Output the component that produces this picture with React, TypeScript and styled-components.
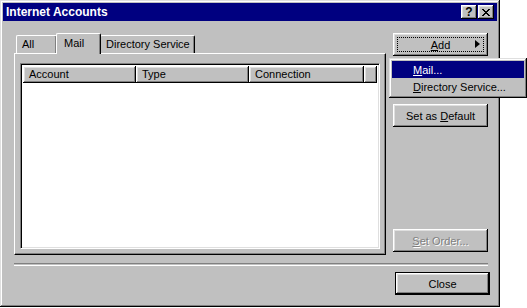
import styled, { createGlobalStyle, css } from "styled-components";

const Global = createGlobalStyle`
  html, body { margin: 0; padding: 0; background: #ffffff; }
  body { font-family: "Liberation Sans", Arial, sans-serif; font-size: 11px; color: #000; }
`;

const raised = css`
  box-shadow: inset -1px -1px #000000, inset 1px 1px #ffffff,
    inset -2px -2px #808080, inset 2px 2px #dfdfdf;
`;

const Window = styled.div`
  position: relative;
  box-sizing: border-box;
  width: 500px;
  height: 307px;
  padding: 3px;
  background: #c0c0c0;
  display: flex;
  flex-direction: column;
  box-shadow: inset -1px -1px #000000, inset 1px 1px #dfdfdf,
    inset -2px -2px #808080, inset 2px 2px #ffffff;
`;

const TitleBar = styled.div`
  height: 18px;
  background: #000080;
  display: flex;
  align-items: center;
  justify-content: space-between;
  padding: 0 3px 0 3px;
`;

const Title = styled.span`
  color: #fff;
  font-weight: bold;
  font-size: 12px;
`;

const TitleButtons = styled.div`
  display: flex;
  gap: 1px;
`;

const TitleButton = styled.div`
  width: 16px;
  height: 14px;
  box-sizing: border-box;
  background: #c0c0c0;
  ${raised};
  display: flex;
  align-items: center;
  justify-content: center;
  font-weight: bold;
  font-size: 12px;
  line-height: 1;
`;

const Content = styled.div`
  flex: 1;
  display: flex;
  flex-direction: column;
  padding: 12px 9px 0 11px;
`;

const MainRow = styled.div`
  display: flex;
  gap: 7px;
  height: 222px;
`;

const LeftCol = styled.div`
  width: 374px;
  display: flex;
  flex-direction: column;
`;

const TabRow = styled.div`
  display: flex;
  align-items: flex-end;
  height: 20px;
  padding-left: 2px;
  position: relative;
  z-index: 1;
`;

const Tab = styled.div<{ $active?: boolean; $w?: number }>`
  box-sizing: border-box;
  background: #c0c0c0;
  ${(p) => (p.$w ? `width: ${p.$w}px;` : "")}
  height: ${(p) => (p.$active ? "21px" : "18px")};
  margin: ${(p) => (p.$active ? "0 -1px -1px -1px" : "0")};
  padding: ${(p) => (p.$active ? "3px 6px 0 7px" : "2px 4px 0 5px")};
  border-top: 1px solid #ffffff;
  border-left: 1px solid #ffffff;
  border-right: 1px solid #000000;
  border-radius: 2px 2px 0 0;
  box-shadow: inset -1px 0 #808080;
  position: relative;
  white-space: nowrap;
  z-index: ${(p) => (p.$active ? 2 : 1)};
`;

const Panel = styled.div`
  flex: 1;
  box-sizing: border-box;
  background: #c0c0c0;
  border-top: 1px solid #ffffff;
  border-left: 1px solid #ffffff;
  border-right: 1px solid #000000;
  border-bottom: 1px solid #000000;
  box-shadow: inset -1px -1px #808080;
  padding: 9px 5px 5px 5px;
  display: flex;
`;

const ListView = styled.div`
  flex: 1;
  box-sizing: border-box;
  background: #ffffff;
  border-top: 1px solid #808080;
  border-left: 1px solid #808080;
  border-right: 1px solid #ffffff;
  border-bottom: 1px solid #ffffff;
  box-shadow: inset 1px 1px #000000, inset -1px -1px #dfdfdf;
  padding: 2px;
  display: flex;
  flex-direction: column;
`;

const HeaderRow = styled.div`
  display: flex;
  height: 17px;
`;

const HeaderCell = styled.div<{ $w?: number }>`
  box-sizing: border-box;
  ${(p) => (p.$w ? `width: ${p.$w}px;` : "flex: 1;")}
  background: #c0c0c0;
  ${raised};
  padding: 2px 0 0 6px;
  white-space: nowrap;
`;

const RightCol = styled.div`
  width: 95px;
  display: flex;
  flex-direction: column;
`;

const Button = styled.button<{ $default?: boolean; $disabled?: boolean }>`
  box-sizing: border-box;
  width: 95px;
  height: 23px;
  border: none;
  background: #c0c0c0;
  font-family: "Liberation Sans", Arial, sans-serif;
  font-size: 11px;
  color: ${(p) => (p.$disabled ? "#808080" : "#000")};
  ${(p) => (p.$disabled ? "text-shadow: 1px 1px #ffffff;" : "")}
  ${(p) =>
    p.$default
      ? `box-shadow: inset 0 0 0 1px #000000, inset -2px -2px #000000, inset 2px 2px #ffffff, inset -3px -3px #808080, inset 3px 3px #dfdfdf;`
      : `box-shadow: inset -1px -1px #000000, inset 1px 1px #ffffff, inset -2px -2px #808080, inset 2px 2px #dfdfdf;`}
  padding: 0;
  display: flex;
  align-items: center;
  justify-content: center;
  position: relative;
`;

const Focus = styled.span`
  position: absolute;
  inset: 4px;
  border: 1px dotted #000;
`;

const Arrow = styled.span`
  position: absolute;
  right: 8px;
  top: 7px;
  width: 0;
  height: 0;
  border-top: 4.5px solid transparent;
  border-bottom: 4.5px solid transparent;
  border-left: 5px solid #000;
`;

const Spacer = styled.div<{ $h?: number }>`
  ${(p) => (p.$h ? `height: ${p.$h}px;` : "flex: 1;")}
`;

const Separator = styled.div`
  margin-top: 8px;
  width: 474px;
  height: 1px;
  border-top: 1px solid #808080;
  border-bottom: 1px solid #ffffff;
`;

const BottomRow = styled.div`
  display: flex;
  justify-content: flex-end;
  margin-top: 6px;
  width: 476px;
`;

const Menu = styled.div`
  position: absolute;
  left: 389px;
  top: 58px;
  width: 138px;
  box-sizing: border-box;
  padding: 3px;
  background: #c0c0c0;
  box-shadow: inset -1px -1px #000000, inset 1px 1px #dfdfdf,
    inset -2px -2px #808080, inset 2px 2px #ffffff;
  z-index: 5;
`;

const MenuItem = styled.div<{ $active?: boolean }>`
  height: 17px;
  display: flex;
  align-items: center;
  padding-left: 21px;
  font-size: 11px;
  background: ${(p) => (p.$active ? "#000080" : "transparent")};
  color: ${(p) => (p.$active ? "#ffffff" : "#000000")};
`;

export default function App() {
  return (
    <>
      <Global />
      <Window>
        <TitleBar>
          <Title>Internet Accounts</Title>
          <TitleButtons>
            <TitleButton>?</TitleButton>
            <TitleButton>
              <svg width="8" height="7" viewBox="0 0 8 7">
                <path d="M0 0h2v1h1v1h2V1h1V0h2v1H7v1H6v1H5v1h1v1h1v1h1v1H6V6H5V5H3v1H2v1H0V6h1V5h1V4h1V3H2V2H1V1H0z" fill="#000" />
              </svg>
            </TitleButton>
          </TitleButtons>
        </TitleBar>
        <Content>
          <MainRow>
            <LeftCol>
              <TabRow>
                <Tab $w={41}>All</Tab>
                <Tab $active $w={45}>
                  Mail
                </Tab>
                <Tab>Directory Service</Tab>
              </TabRow>
              <Panel>
                <ListView>
                  <HeaderRow>
                    <HeaderCell $w={113}>Account</HeaderCell>
                    <HeaderCell $w={113}>Type</HeaderCell>
                    <HeaderCell $w={115}>Connection</HeaderCell>
                    <HeaderCell />
                  </HeaderRow>
                </ListView>
              </Panel>
            </LeftCol>
            <RightCol>
              <Button>
                <Focus />
                <span>
                  <u>A</u>dd
                </span>
                <Arrow />
              </Button>
              <Spacer $h={48} />
              <Button>
                <span>
                  Set as <u>D</u>efault
                </span>
              </Button>
              <Spacer />
              <Button $disabled>
                <span>
                  <u>S</u>et Order...
                </span>
              </Button>
              <Spacer $h={3} />
            </RightCol>
          </MainRow>
          <Separator />
          <BottomRow>
            <Button $default>Close</Button>
          </BottomRow>
        </Content>
        <Menu>
          <MenuItem $active>
            <span>
              <u>M</u>ail...
            </span>
          </MenuItem>
          <MenuItem>
            <span>
              <u>D</u>irectory Service...
            </span>
          </MenuItem>
        </Menu>
      </Window>
    </>
  );
}
